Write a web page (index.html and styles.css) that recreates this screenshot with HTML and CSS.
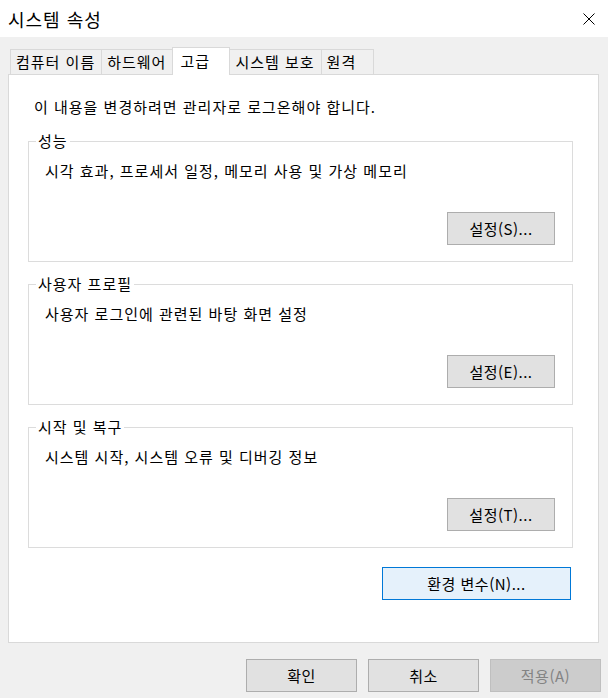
FILE: index.html
```html
<!DOCTYPE html>
<html lang="ko">
<head>
  <meta charset="UTF-8" />
  <meta name="viewport" content="width=device-width, initial-scale=1.0" />
  <title>시스템 속성</title>
  <link rel="stylesheet" href="styles.css">
</head>
<body>
  <div class="titlebar">
    <span class="title">시스템 속성</span>
    <span class="close">
      <svg width="12" height="12" viewBox="0 0 12 12"><path d="M0.5 0.5L11.5 11.5M11.5 0.5L0.5 11.5" stroke="#000" stroke-width="1" fill="none"/></svg>
    </span>
  </div>

  <div class="dialog">
    <div class="tabs">
      <div class="tab">컴퓨터 이름</div>
      <div class="tab">하드웨어</div>
      <div class="tab active">고급</div>
      <div class="tab">시스템 보호</div>
      <div class="tab">원격</div>
    </div>

    <div class="panel">
      <p class="note">이 내용을 변경하려면 관리자로 로그온해야 합니다.</p>

      <fieldset class="group">
        <legend>성능</legend>
        <p class="desc">시각 효과, 프로세서 일정, 메모리 사용 및 가상 메모리</p>
        <div class="group-actions"><button class="btn">설정(S)...</button></div>
      </fieldset>

      <fieldset class="group">
        <legend>사용자 프로필</legend>
        <p class="desc">사용자 로그인에 관련된 바탕 화면 설정</p>
        <div class="group-actions"><button class="btn">설정(E)...</button></div>
      </fieldset>

      <fieldset class="group">
        <legend>시작 및 복구</legend>
        <p class="desc">시스템 시작, 시스템 오류 및 디버깅 정보</p>
        <div class="group-actions"><button class="btn">설정(T)...</button></div>
      </fieldset>

      <div class="env-row"><button class="btn btn-default env">환경 변수(N)...</button></div>
    </div>

    <div class="footer">
      <button class="btn wide">확인</button>
      <button class="btn wide">취소</button>
      <button class="btn wide" disabled>적용(A)</button>
    </div>
  </div>
</body>
</html>
```

FILE: styles.css
```css
body {
  margin: 0;
  background-color: #f0f0f0;
  font-family: "Noto Sans CJK KR", "Noto Sans", sans-serif;
  font-size: 15px;
  letter-spacing: 1px;
  color: #000;
}

.titlebar {
  height: 37px;
  background-color: #fff;
  display: flex;
  align-items: center;
  justify-content: space-between;
  padding: 0 13px 0 8px;
}

.title {
  font-size: 18px;
  line-height: 24px;
}

.close {
  display: flex;
  width: 12px;
  height: 12px;
}

.dialog {
  padding: 10px 0 0 8px;
}

.tabs {
  display: flex;
  align-items: flex-end;
  padding-left: 2px;
}

.tab {
  box-sizing: border-box;
  height: 25px;
  min-width: 53px;
  padding: 0 6px 0 5px;
  margin-left: -1px;
  border: 1px solid #d9d9d9;
  border-bottom: none;
  background-color: #f0f0f0;
  line-height: 24px;
  white-space: nowrap;
}

.tab:first-child {
  margin-left: 0;
}

.tab.active {
  height: 28px;
  min-width: 58px;
  padding-left: 7px;
  margin-bottom: -1px;
  background-color: #fff;
  line-height: 25px;
  position: relative;
  z-index: 1;
}

.panel {
  box-sizing: border-box;
  width: 591px;
  height: 569px;
  border: 1px solid #d9d9d9;
  background-color: #fff;
  padding: 22px 25px 0 19px;
}

.note {
  margin: 0;
  padding-left: 6px;
  line-height: 20px;
}

.group {
  margin: 12px 0 0;
  padding: 10px 17px 16px 16px;
  border: 1px solid #dcdcdc;
}

.group:first-of-type {
  margin-top: 14px;
}

.group legend {
  margin-left: -9px;
  padding: 0 2px;
  line-height: 20px;
}

.desc {
  margin: 0;
  line-height: 20px;
}

.group-actions {
  display: flex;
  justify-content: flex-end;
  margin-top: 31px;
}

.btn {
  box-sizing: border-box;
  width: 108px;
  height: 33px;
  padding: 0;
  border: 1px solid #adadad;
  background-color: #e1e1e1;
  font-family: inherit;
  font-size: 15px;
  letter-spacing: 0.5px;
  color: #000;
}

.btn-default {
  border-color: #0078d7;
  background-color: #e5f1fb;
}

.btn:disabled {
  border-color: #bfbfbf;
  background-color: #cccccc;
  color: #838383;
}

.env-row {
  display: flex;
  justify-content: flex-end;
  margin-top: 19px;
  padding-right: 2px;
}

.env {
  width: 189px;
}

.footer {
  display: flex;
  justify-content: flex-end;
  gap: 11px;
  margin-top: 16px;
  padding-right: 7px;
}

.wide {
  width: 111px;
}
```
